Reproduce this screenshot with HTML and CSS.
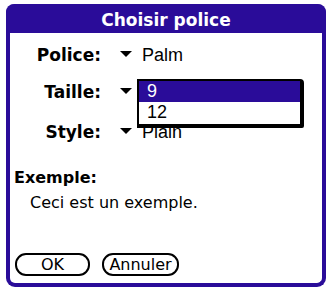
FILE: index.html
```html
<!DOCTYPE html>
<html>
<head>
<meta charset="utf-8">
<link rel="stylesheet" href="styles.css">
</head>
<body>
<div class="dialog">
  <div class="title">Choisir police</div>
  <div class="content">
    <div class="row row-police">
      <span class="label">Police:</span><span class="arrow"></span><span class="value">Palm</span>
    </div>
    <div class="row row-taille">
      <span class="label">Taille:</span><span class="arrow"></span>
    </div>
    <div class="row row-style">
      <span class="label">Style:</span><span class="arrow"></span><span class="value">Plain</span>
    </div>
    <div class="sample-label">Exemple:</div>
    <div class="sample">Ceci est un exemple.</div>
    <div class="buttons">
      <span class="btn btn-ok">OK</span>
      <span class="btn btn-cancel">Annuler</span>
    </div>
  </div>
  <div class="popup">
    <div class="item selected">9</div>
    <div class="item">12</div>
  </div>
</div>
</body>
</html>
```
FILE: styles.css
```css
html, body {
  margin: 0;
  padding: 0;
  background: #ffffff;
}
.dialog {
  position: relative;
  box-sizing: border-box;
  margin: 4px 0 0 6px;
  width: 320px;
  height: 283px;
  border: 4px solid #2a0c99;
  border-top: 0;
  border-radius: 9px;
  background: #ffffff;
  display: flex;
  flex-direction: column;
}
.title {
  box-sizing: border-box;
  background: #2a0c99;
  color: #ffffff;
  height: 29px;
  margin: 0 -4px;
  padding-top: 4px;
  border-radius: 8px 8px 0 0;
  font: bold 17px/25px "DejaVu Sans", sans-serif;
  text-align: center;
}
.content {
  flex: 1;
  display: flex;
  flex-direction: column;
  padding: 0 0 0 4px;
}
.row {
  white-space: nowrap;
  font: bold 17px/38px "DejaVu Sans", sans-serif;
  height: 38px;
}
.row-police { margin-top: 3px; height: 37px; }
.row-taille { height: 40px; }
.label {
  display: inline-block;
  width: 87px;
  text-align: right;
  color: #000;
}
.arrow {
  display: inline-block;
  width: 0;
  height: 0;
  border-left: 6px solid transparent;
  border-right: 6px solid transparent;
  border-top: 6px solid #000;
  margin: 0 10px 0 19px;
  vertical-align: 4px;
}
.value {
  font: 18px "Liberation Sans", Arial, sans-serif;
  color: #000;
}
.sample-label {
  margin-top: 17px;
  font: bold 16px/20px "DejaVu Sans", sans-serif;
  color: #000;
}
.sample {
  margin-top: 5px;
  padding-left: 16px;
  font: 16px/20px "DejaVu Sans", sans-serif;
  color: #000;
}
.buttons {
  margin-top: auto;
  margin-bottom: 7px;
  display: flex;
  gap: 12px;
}
.btn {
  box-sizing: border-box;
  height: 23px;
  border: 2px solid #000;
  border-radius: 11px;
  font: 16px/19px "DejaVu Sans", sans-serif;
  text-align: center;
  color: #000;
}
.btn-ok { width: 75px; margin-left: 1px; }
.btn-cancel { width: 77px; }
.popup {
  position: absolute;
  left: 127px;
  top: 75px;
  width: 167px;
  height: 49px;
  box-sizing: border-box;
  border-top: 2px solid #000;
  border-left: 2px solid #000;
  border-right: 4px solid #000;
  border-bottom: 4px solid #000;
  border-radius: 0 4px 2px 0;
  background: #fff;
  overflow: hidden;
}
.item {
  height: 21px;
  padding-left: 8px;
  font: 18px/21px "Liberation Sans", Arial, sans-serif;
  color: #000;
}
.item.selected {
  background: #2a0c99;
  color: #fff;
}
```
